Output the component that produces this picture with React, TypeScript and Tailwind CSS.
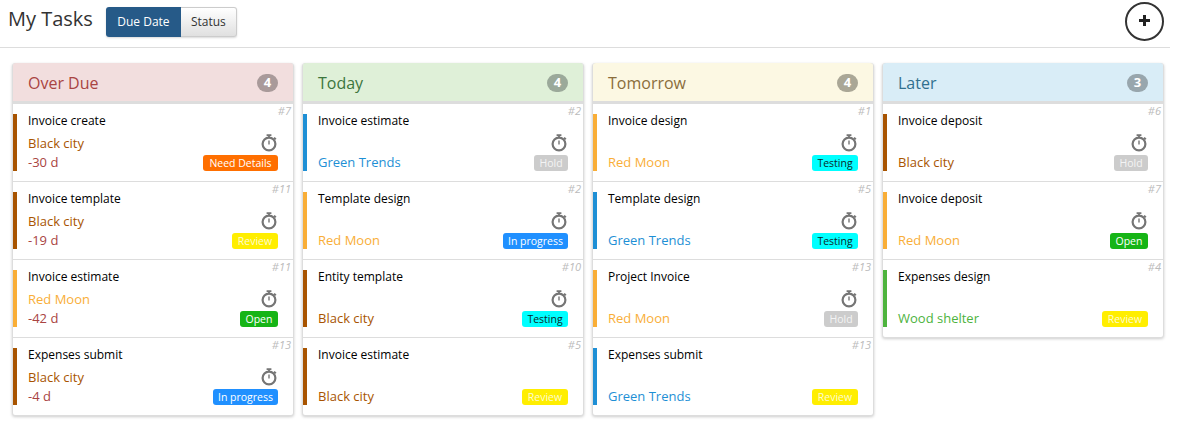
type Task = { title: string; id: number; client: keyof typeof clients; days?: string; status: keyof typeof statuses; noTimer?: boolean };

const clients = {
  'Black city': { bar: 'bg-[#a85400]', text: 'text-[#a85400]' },
  'Red Moon': { bar: 'bg-[#f9ae37]', text: 'text-[#f9ae37]' },
  'Green Trends': { bar: 'bg-[#1e8fd5]', text: 'text-[#1e8fd5]' },
  'Wood shelter': { bar: 'bg-[#4db33d]', text: 'text-[#4db33d]' },
};

const statuses = {
  'Need Details': 'w-[75px] bg-[#ff6f00] text-white',
  Review: 'w-[46px] bg-[#ffee00] text-[#fdfbd0]',
  Open: 'w-[38px] bg-[#16b416] text-white',
  'In progress': 'w-[65px] bg-[#2090ff] text-white',
  Hold: 'w-[34px] bg-[#cccccc] text-[#f4f4f4]',
  Testing: 'w-[46px] bg-[#00ffff] text-[#0c2a2a]',
};

const columns: { name: string; head: string; title: string; badge: string; tasks: Task[] }[] = [
  {
    name: 'Over Due',
    head: 'bg-[#f2dede]',
    title: 'text-[#a94442]',
    badge: 'bg-[#a99a9a]',
    tasks: [
      { title: 'Invoice create', id: 7, client: 'Black city', days: '-30 d', status: 'Need Details' },
      { title: 'Invoice template', id: 11, client: 'Black city', days: '-19 d', status: 'Review' },
      { title: 'Invoice estimate', id: 11, client: 'Red Moon', days: '-42 d', status: 'Open' },
      { title: 'Expenses submit', id: 13, client: 'Black city', days: '-4 d', status: 'In progress' },
    ],
  },
  {
    name: 'Today',
    head: 'bg-[#dff0d8]',
    title: 'text-[#3c763d]',
    badge: 'bg-[#9ba99a]',
    tasks: [
      { title: 'Invoice estimate', id: 2, client: 'Green Trends', status: 'Hold' },
      { title: 'Template design', id: 2, client: 'Red Moon', status: 'In progress' },
      { title: 'Entity template', id: 10, client: 'Black city', status: 'Testing' },
      { title: 'Invoice estimate', id: 5, client: 'Black city', status: 'Review', noTimer: true },
    ],
  },
  {
    name: 'Tomorrow',
    head: 'bg-[#fcf8e3]',
    title: 'text-[#8a6d3b]',
    badge: 'bg-[#aaa796]',
    tasks: [
      { title: 'Invoice design', id: 1, client: 'Red Moon', status: 'Testing' },
      { title: 'Template design', id: 5, client: 'Green Trends', status: 'Testing' },
      { title: 'Project Invoice', id: 13, client: 'Red Moon', status: 'Hold' },
      { title: 'Expenses submit', id: 13, client: 'Green Trends', status: 'Review', noTimer: true },
    ],
  },
  {
    name: 'Later',
    head: 'bg-[#d9edf7]',
    title: 'text-[#31708f]',
    badge: 'bg-[#98a6ad]',
    tasks: [
      { title: 'Invoice deposit', id: 6, client: 'Black city', status: 'Hold' },
      { title: 'Invoice deposit', id: 7, client: 'Red Moon', status: 'Open' },
      { title: 'Expenses design', id: 4, client: 'Wood shelter', status: 'Review', noTimer: true },
    ],
  },
];

function Timer() {
  return (
    <svg width="17" height="18" viewBox="0 0 17 18" fill="none" stroke="#757575">
      <circle cx="8" cy="10" r="6.4" strokeWidth="2.2" />
      <path d="M8 1v3M5.6 1.2h4.8" strokeWidth="1.8" />
      <path d="M13 3.6l1.8 1.8" strokeWidth="2" />
      <path d="M8 6.5v4" strokeWidth="1.4" />
    </svg>
  );
}

function TaskCard({ task }: { task: Task }) {
  const client = clients[task.client];
  return (
    <div className="relative h-[78px] last:h-[77px] border-b border-[#ddd] last:border-b-0 pt-[10px] flex">
      <div className={`w-[4px] h-[57px] shrink-0 ${client.bar}`} />
      <div className="ml-[11px] mr-[15px] flex-1 min-w-0 h-[57px] flex flex-col">
        <div className="text-[12px] leading-[14px] text-black">{task.title}</div>
        <div className="flex-1 flex justify-between items-end">
          <div className="text-[13px] leading-[19px] -mb-[1px]">
            <div className={client.text}>{task.client}</div>
            {task.days && <div className="text-[#a94442]">{task.days}</div>}
          </div>
          <div className="flex flex-col items-end">
            {!task.noTimer && <div className="mb-[3px]"><Timer /></div>}
            <span className={`h-[16px] rounded-[3px] text-center text-[10.5px] leading-[16px] ${statuses[task.status]}`}>{task.status}</span>
          </div>
        </div>
      </div>
      <span className="absolute top-0 right-[2px] text-[11px] leading-[14px] italic text-[#bbb]">#{task.id}</span>
    </div>
  );
}

export default function App() {
  return (
    <div className="w-[1182px] h-[432px] bg-white font-['Open_Sans',sans-serif] overflow-hidden">
      <header className="h-[48px] w-[1170px] border-b border-[#ddd] flex items-start pl-[8px] pr-[6px]">
        <h1 className="text-[20px] leading-[28px] mt-[5px] text-[#333]">My Tasks</h1>
        <div className="ml-[13px] mt-[7px] flex h-[30px] text-[12px] rounded-[3px] shadow-[0_1px_2px_rgba(0,0,0,0.15)]">
          <button className="w-[75px] bg-[#265a88] text-white rounded-l-[3px]">Due Date</button>
          <button className="w-[56px] text-[#333] rounded-r-[3px] border border-l-0 border-[#ccc] bg-gradient-to-b from-white to-[#e0e0e0]">Status</button>
        </div>
        <button className="ml-auto mt-[2px] w-[39px] h-[39px] rounded-full border-2 border-[#333] flex items-center justify-center">
          <svg width="11" height="11" viewBox="0 0 11 11" className="mb-[2px]" fill="#222">
            <path d="M4 0h3v4h4v3H7v4H4V7H0V4h4z" />
          </svg>
        </button>
      </header>
      <main className="mt-[15px] ml-[12px] flex items-start gap-[8px]">
        {columns.map(col => (
          <section key={col.name} className="w-[282px] rounded-[3px] border border-[#ddd] bg-white shadow-[0_1px_3px_rgba(0,0,0,0.2)]">
            <div className={`h-[41px] -mt-[1px] rounded-t-[3px] border-b-[3px] border-[#ddd] pt-[2px] px-[15px] flex items-center justify-between ${col.head}`}>
              <h2 className={`text-[16px] ${col.title}`}>{col.name}</h2>
              <span className={`w-[21px] h-[18px] rounded-full text-white text-[13px] font-bold flex items-center justify-center ${col.badge}`}>
                {col.tasks.length}
              </span>
            </div>
            {col.tasks.map((task, i) => <TaskCard key={i} task={task} />)}
          </section>
        ))}
      </main>
    </div>
  );
}
